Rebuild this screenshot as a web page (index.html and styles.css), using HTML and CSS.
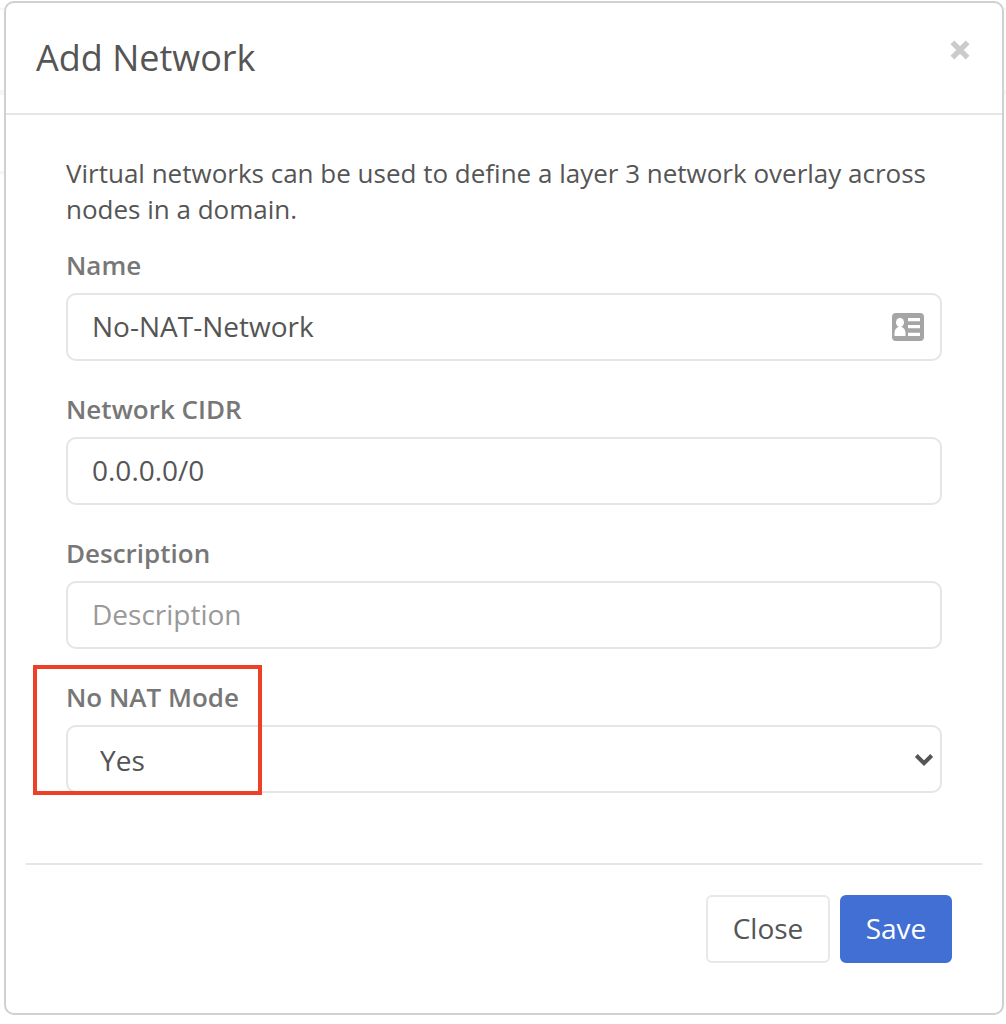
FILE: index.html
```html
<!DOCTYPE html>
<html lang="en">
<head>
<meta charset="utf-8">
<title>Add Network</title>
<link rel="stylesheet" href="styles.css">
</head>
<body>
<div class="modal">
  <header class="modal-header">
    <h1 class="modal-title">Add Network</h1>
    <button class="dismiss" type="button" aria-label="Dismiss">
      <svg width="20" height="20" viewBox="0 0 20 20"><path d="M2.400 2.400 17.600 17.600M17.600 2.400 2.400 17.600" stroke="#cbcbcb" stroke-width="5.4" fill="none"/></svg>
    </button>
  </header>
  <form class="modal-body">
    <p class="intro">Virtual networks can be used to define a layer 3 network overlay across nodes in a domain.</p>
    <div class="field">
      <label class="label" for="name">Name</label>
      <div class="control">
        <input class="input" id="name" type="text" value="No-NAT-Network">
        <svg class="card-icon" width="32" height="28" viewBox="0 0 32 28"><rect width="32" height="28" rx="4" fill="#a5a5a5"/><g fill="#fff"><ellipse cx="8" cy="9.6" rx="4" ry="4.6"/><path d="M2.500 23v-3c0-3.500 1.800-5.500 4-6h3c2.200.5 4 2.500 4 6v3zM16 5h12v3.300H16zM16 12h12v3.300H16zM16 19.700h12V23H16z"/></g></svg>
      </div>
    </div>
    <div class="field">
      <label class="label" for="cidr">Network CIDR</label>
      <div class="control"><input class="input" id="cidr" type="text" value="0.0.0.0/0"></div>
    </div>
    <div class="field">
      <label class="label" for="description">Description</label>
      <div class="control"><input class="input" id="description" type="text" placeholder="Description"></div>
    </div>
    <div class="field">
      <label class="label" for="mode">No NAT Mode</label>
      <div class="control">
        <select class="input select" id="mode"><option>Yes</option><option>No</option></select>
        <svg class="chevron" width="20" height="14" viewBox="0 0 20 14"><path d="M2.300 2.500 10 10.200 17.700 2.500" stroke="#555" stroke-width="4" fill="none"/></svg>
      </div>
      <div class="highlight"></div>
    </div>
  </form>
  <footer class="modal-footer">
    <button class="button" type="button">Close</button>
    <button class="button primary" type="button">Save</button>
  </footer>
</div>
</body>
</html>
```
FILE: styles.css
```css
* { box-sizing: border-box; }

body {
  margin: 0;
  padding: 1px 2px 0 4px;
  height: 1024px;
  overflow: hidden;
  background:
    linear-gradient(#f6f6f6, #f6f6f6) 0 8px / 100% 2px no-repeat,
    linear-gradient(#f6f6f6, #f6f6f6) 0 90px / 100% 5px no-repeat,
    linear-gradient(#f6f6f6, #f6f6f6) 0 171px / 4px 3px no-repeat,
    #fff;
  color: #555;
  font-family: "Open Sans", "Noto Sans", sans-serif;
}

.modal {
  height: 1014px;
  border: 2px solid #d0d0d0;
  border-radius: 10px;
  background: #fff;
}

.modal-header {
  display: flex;
  justify-content: space-between;
  align-items: flex-start;
  height: 112px;
  padding: 30px 32px 0 30px;
  border-bottom: 2px solid #e5e5e5;
}

.modal-title {
  margin: 0;
  font-size: 36px;
  font-weight: 400;
  line-height: 50px;
}

.dismiss {
  display: block;
  width: 20px;
  height: 20px;
  margin-top: 7px;
  padding: 0;
  border: 0;
  background: none;
}

.dismiss svg { display: block; }

.modal-body { padding: 40px 60px 0; }

.intro {
  margin: 0 0 20px;
  font-size: 26px;
  line-height: 36px;
}

.field {
  position: relative;
  height: 144px;
}

.label {
  display: block;
  margin-bottom: 10px;
  color: #777;
  font-size: 26px;
  font-weight: 600;
  line-height: 36px;
}

.control { position: relative; }

.input {
  display: block;
  width: 100%;
  height: 68px;
  padding: 0 24px 2px;
  border: 2px solid #e5e5e5;
  border-radius: 10px;
  outline: 0;
  background: #fff;
  color: #555;
  font: 28px "Open Sans", "Noto Sans", sans-serif;
}

.input::placeholder {
  color: #999;
  opacity: 1;
}

.select {
  padding: 2px 32px 0;
  appearance: none;
}

.card-icon {
  position: absolute;
  top: 20px;
  right: 18px;
}

.chevron {
  position: absolute;
  top: 28px;
  right: 8px;
}

.highlight {
  position: absolute;
  top: -14px;
  left: -33px;
  width: 229px;
  height: 130px;
  border: 4px solid #ee4027;
}

.modal-footer {
  display: flex;
  justify-content: flex-end;
  gap: 10px;
  margin: 40px 20px 0;
  padding: 30px 30px 0;
  border-top: 2px solid #e5e5e5;
}

.button {
  width: 124px;
  height: 68px;
  padding: 0 0 2px;
  border: 2px solid #e8e8e8;
  border-radius: 6px;
  background: #fff;
  color: #555;
  font: 28px "Open Sans", "Noto Sans", sans-serif;
}

.primary {
  width: 112px;
  border-color: #426fd3;
  background: #426fd3;
  color: #fff;
}
```
